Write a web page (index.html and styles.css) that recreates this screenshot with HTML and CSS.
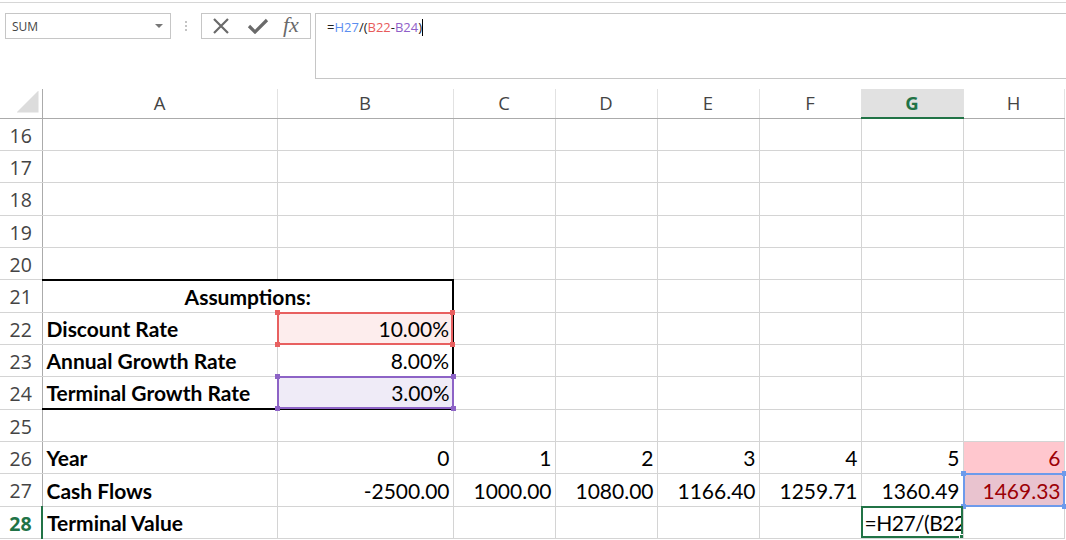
FILE: index.html
```html
<!DOCTYPE html>
<html lang="en">
<head>
    <meta charset="UTF-8">
    <title>DCF - Terminal Value</title>
    <link rel="stylesheet" href="styles.css">
</head>
<body>

<div class="ribbon-edge"></div>

<div class="formula-bar">
    <div class="name-box">
        <span>SUM</span>
        <span class="caret"></span>
    </div>
    <div class="grip"><i></i><i></i><i></i></div>
    <div class="fx-buttons">
        <svg width="20" height="16" viewBox="0 0 20 16"><path d="M3 1 L17 15 M17 1 L3 15" stroke="#6a6a6a" stroke-width="2.2" fill="none"/></svg>
        <svg width="22" height="16" viewBox="0 0 22 16"><path d="M2 8 L8 14 L20 2" stroke="#6a6a6a" stroke-width="3.2" fill="none"/></svg>
        <span class="fx">fx</span>
    </div>
    <div class="formula-input">
        =<span class="ref-blue">H27</span>/(<span class="ref-red">B22</span>-<span class="ref-purple">B24</span>)<span class="cursor"></span>
    </div>
</div>

<table class="sheet">
    <colgroup>
        <col class="c-head">
        <col class="c-a">
        <col class="c-b">
        <col class="c-std">
        <col class="c-std">
        <col class="c-std">
        <col class="c-std">
        <col class="c-std">
        <col class="c-last">
    </colgroup>
    <tr class="col-heads">
        <th class="corner"><span class="tri"></span></th>
        <th>A</th><th>B</th><th>C</th><th>D</th><th>E</th><th>F</th><th class="active">G</th><th>H</th>
    </tr>
    <tr><th>16</th><td></td><td></td><td></td><td></td><td></td><td></td><td></td><td></td></tr>
    <tr><th>17</th><td></td><td></td><td></td><td></td><td></td><td></td><td></td><td></td></tr>
    <tr><th>18</th><td></td><td></td><td></td><td></td><td></td><td></td><td></td><td></td></tr>
    <tr><th>19</th><td></td><td></td><td></td><td></td><td></td><td></td><td></td><td></td></tr>
    <tr><th>20</th><td></td><td></td><td></td><td></td><td></td><td></td><td></td><td></td></tr>
    <tr>
        <th>21</th>
        <td class="b bt title" colspan="2">Assumptions:</td>
        <td></td><td></td><td></td><td></td><td></td><td></td>
    </tr>
    <tr>
        <th>22</th>
        <td class="b">Discount Rate</td>
        <td class="num br hl-red">10.00%<span class="sel sel-red"><i class="tl"></i><i class="tr"></i><i class="bl"></i><i class="brh"></i></span></td>
        <td></td><td></td><td></td><td></td><td></td><td></td>
    </tr>
    <tr>
        <th>23</th>
        <td class="b">Annual Growth Rate</td>
        <td class="num br">8.00%</td>
        <td></td><td></td><td></td><td></td><td></td><td></td>
    </tr>
    <tr>
        <th>24</th>
        <td class="b bb">Terminal Growth Rate</td>
        <td class="num bb hl-purple">3.00%<span class="sel sel-purple"><i class="tl"></i><i class="tr"></i><i class="bl"></i><i class="brh"></i></span></td>
        <td></td><td></td><td></td><td></td><td></td><td></td>
    </tr>
    <tr><th>25</th><td></td><td></td><td></td><td></td><td></td><td></td><td></td><td></td></tr>
    <tr>
        <th>26</th>
        <td class="b">Year</td>
        <td class="num">0</td>
        <td class="num">1</td>
        <td class="num">2</td>
        <td class="num">3</td>
        <td class="num">4</td>
        <td class="num">5</td>
        <td class="num bad">6</td>
    </tr>
    <tr>
        <th>27</th>
        <td class="b">Cash Flows</td>
        <td class="num">-2500.00</td>
        <td class="num">1000.00</td>
        <td class="num">1080.00</td>
        <td class="num">1166.40</td>
        <td class="num">1259.71</td>
        <td class="num">1360.49</td>
        <td class="num bad hl-blue">1469.33<span class="sel sel-blue"><i class="tl"></i><i class="tr"></i><i class="bl"></i><i class="brh"></i></span></td>
    </tr>
    <tr>
        <th class="active-row">28</th>
        <td class="b">Terminal Value</td>
        <td></td><td></td><td></td><td></td><td></td>
        <td class="editing"><span class="clip">=H27/(B22</span><span class="fill-handle"></span></td>
        <td></td>
    </tr>
</table>

</body>
</html>
```

FILE: styles.css
```css
body {
    margin: 0;
    background-color: #fff;
    font-family: Lato, "Liberation Sans", sans-serif;
    overflow: hidden;
    height: 540px;
}

/* ---- formula bar ---- */
.ribbon-edge {
    height: 2px;
    border-bottom: 1px solid #d6d6d6;
}
.formula-bar {
    display: flex;
    align-items: flex-start;
    padding: 10px 0 0 5px;
    height: 66px;
    margin-bottom: 10px;
    font-family: "Open Sans", "Noto Sans", sans-serif;
}
.name-box {
    box-sizing: border-box;
    width: 166px;
    height: 26px;
    border: 1px solid #c6c6c6;
    display: flex;
    align-items: center;
    justify-content: space-between;
    padding: 0 7px 0 6px;
    font-size: 12px;
    color: #444;
}
.caret {
    width: 0;
    height: 0;
    border-left: 4px solid transparent;
    border-right: 4px solid transparent;
    border-top: 4px solid #777;
}
.grip {
    width: 30px;
    height: 26px;
    display: flex;
    flex-direction: column;
    align-items: center;
    justify-content: center;
    gap: 2px;
}
.grip i {
    width: 2px;
    height: 2px;
    background-color: #c4c4c4;
}
.fx-buttons {
    box-sizing: border-box;
    width: 110px;
    height: 26px;
    border: 1px solid #c6c6c6;
    display: flex;
    align-items: center;
    padding: 0 0 0 9px;
    gap: 16px;
}
.fx-buttons svg {
    display: block;
}
.fx {
    font-family: "Liberation Serif", serif;
    font-style: italic;
    font-size: 22px;
    color: #6a6a6a;
    margin-left: -2px;
    margin-top: -3px;
}
.formula-input {
    box-sizing: border-box;
    flex: 1;
    height: 66px;
    margin-left: 4px;
    border: 1px solid #c6c6c6;
    border-right: none;
    padding: 4px 0 0 11px;
    font-size: 13px;
    color: #222;
    display: flex;
    align-items: flex-start;
}
.formula-input .ref-blue { color: #5b8ef0; }
.formula-input .ref-red { color: #e85b5b; }
.formula-input .ref-purple { color: #8f60c8; }
.cursor {
    display: inline-block;
    width: 1px;
    height: 17px;
    margin-top: 1px;
    background-color: #000;
}

/* ---- grid ---- */
.sheet {
    border-collapse: collapse;
    table-layout: fixed;
    width: 1064px;
}
.c-head { width: 42px; }
.c-a { width: 235px; }
.c-b { width: 176px; }
.c-std { width: 102px; }
.c-last { width: 101px; }

.sheet tr {
    height: 32.35px;
}
.sheet tr.col-heads {
    height: 29px;
}
.sheet th {
    font-family: "Open Sans", "Noto Sans", sans-serif;
    font-weight: 400;
    color: #444;
    padding: 0;
    border-right: 1px solid #d4d4d4;
    border-bottom: 1px solid #d4d4d4;
}
.col-heads th {
    font-size: 18.5px;
    border-bottom: 1px solid #ababab;
    border-right: 1px solid #e2e2e2;
    line-height: 1;
    vertical-align: middle;
}
.sheet tr > th:first-child {
    font-size: 19.5px;
    text-align: center;
    border-right: 1px solid #ababab;
    padding-top: 2px;
}
.corner {
    position: relative;
}
.tri {
    position: absolute;
    right: 3px;
    bottom: 5px;
    width: 22px;
    height: 22px;
    background-color: #dcdcdc;
    clip-path: polygon(100% 0, 100% 100%, 0 100%);
}
.col-heads th.active {
    background-color: #e1e1e1;
    color: #217346;
    font-weight: 700;
    border-bottom: 2px solid #217346;
}
.sheet tr > th.active-row {
    color: #217346;
    font-weight: 700;
    border-right: 2px solid #217346;
}

.sheet td {
    position: relative;
    border-right: 1px solid #d4d4d4;
    border-bottom: 1px solid #d4d4d4;
    padding: 0 3px 2px 4px;
    font-size: 21px;
    line-height: 26px;
    color: #000;
    vertical-align: bottom;
    white-space: nowrap;
}
.sheet td.b {
    font-weight: 700;
}
.sheet td.title {
    text-align: center;
}
.sheet td.num {
    text-align: right;
}
.sheet td.bt { border-top: 2px solid #000; }
.sheet td.br { border-right: 2px solid #000; }
.sheet td.bb { border-bottom: 2px solid #000; }
.sheet td.title { border-right: 2px solid #000; }

.sheet td.bad {
    background-color: #ffc7ce;
    color: #9c0006;
}
.sheet td.hl-red { background-color: #fdeded; }
.sheet td.hl-purple { background-color: #efebf7; }
.sheet td.hl-blue { background-color: #e9c3cf; }

/* reference boxes drawn over the cells while editing */
.sel {
    position: absolute;
    left: -1px;
    top: -1px;
    right: -1px;
    bottom: -1px;
    border: 2px solid;
}
.sel-red { border-color: #e86060; }
.sel-purple { border-color: #8d63c6; }
.sel-blue { border-color: #6d9aeb; }
.sel i {
    position: absolute;
    width: 5px;
    height: 5px;
}
.sel-red i { background-color: #e86060; }
.sel-purple i { background-color: #8d63c6; }
.sel-blue i { background-color: #6d9aeb; }
.sel .tl { left: -4px; top: -4px; }
.sel .tr { right: -4px; top: -4px; }
.sel .bl { left: -4px; bottom: -4px; }
.sel .brh { right: -4px; bottom: -4px; }

.sheet td.editing {
    outline: 2px solid #217346;
    outline-offset: -2px;
    overflow: hidden;
    padding-left: 3px;
    padding-right: 0;
}
.clip {
    display: block;
    overflow: hidden;
    letter-spacing: -0.5px;
}
.fill-handle {
    position: absolute;
    right: -3px;
    bottom: -3px;
    width: 5px;
    height: 5px;
    background-color: #217346;
    border: 1px solid #fff;
}
```
